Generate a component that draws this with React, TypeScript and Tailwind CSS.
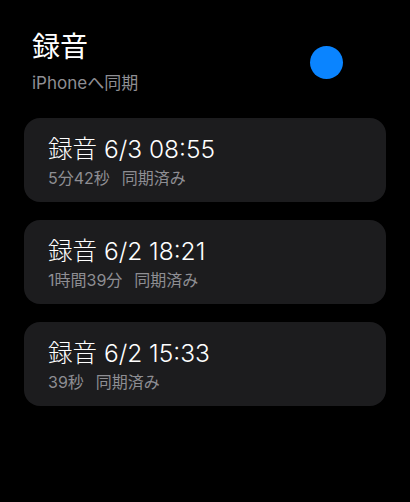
import React from 'react';

const RECORDINGS = [
  { id: 1, title: '録音 6/3 08:55', duration: '5分42秒', status: '同期済み' },
  { id: 2, title: '録音 6/2 18:21', duration: '1時間39分', status: '同期済み' },
  { id: 3, title: '録音 6/2 15:33', duration: '39秒', status: '同期済み' },
];

export default function App() {
  return (
    <div
      className="w-[410px] h-[502px] bg-black text-white overflow-hidden"
      style={{ fontFamily: '"Inter", "Noto Sans CJK JP", sans-serif' }}
    >
      {/* Header */}
      <div className="flex items-center pt-[30px] pl-[32px] pr-[67px]">
        <div className="flex-1">
          <h1 className="text-[28px] leading-[34px] font-normal">録音</h1>
          <p className="mt-[8px] text-[17px] leading-[22px] text-[#8e8e93]">iPhoneへ同期</p>
        </div>
        <div className="w-[33px] h-[33px] rounded-full bg-[#0a84ff]" />
      </div>

      {/* Recordings */}
      <div className="flex flex-col gap-[18px] px-[24px] mt-[24px]">
        {RECORDINGS.map((r) => (
          <div key={r.id} className="h-[84px] rounded-[16px] bg-[#1c1c1e] px-[24px] pt-[16px]">
            <div className="text-[24.5px] leading-[30px] font-light">{r.title}</div>
            <div className="flex gap-[12px] text-[16px] leading-[20px] text-[#8e8e93] mt-[4px]">
              <span>{r.duration}</span>
              <span>{r.status}</span>
            </div>
          </div>
        ))}
      </div>
    </div>
  );
}
